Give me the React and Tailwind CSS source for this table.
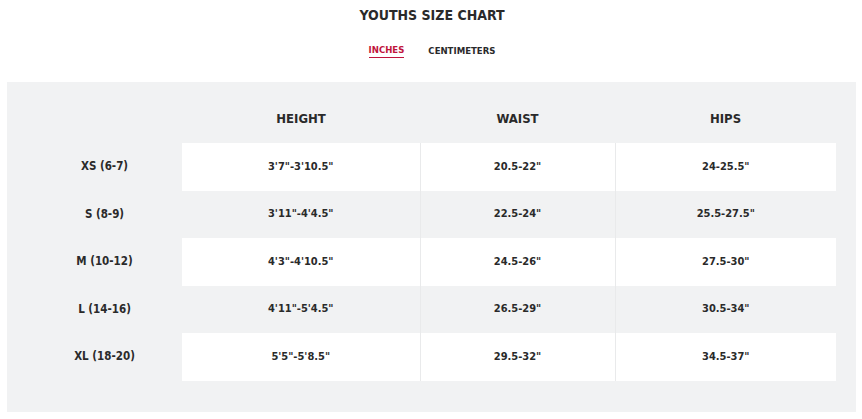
import React, { useState } from 'react'

const rows = [
  { size: 'XS (6-7)', height: `3'7"-3'10.5"`, waist: '20.5-22"', hips: '24-25.5"' },
  { size: 'S (8-9)', height: `3'11"-4'4.5"`, waist: '22.5-24"', hips: '25.5-27.5"' },
  { size: 'M (10-12)', height: `4'3"-4'10.5"`, waist: '24.5-26"', hips: '27.5-30"' },
  { size: 'L (14-16)', height: `4'11"-5'4.5"`, waist: '26.5-29"', hips: '30.5-34"' },
  { size: 'XL (18-20)', height: `5'5"-5'8.5"`, waist: '29.5-32"', hips: '34.5-37"' },
]

export default function App() {
  const [unit, setUnit] = useState('in')
  const font = { fontFamily: '"DejaVu Sans Condensed", "DejaVu Sans", sans-serif' }

  return (
    <div className="w-[862px] h-[419px] bg-white text-[#2a2a2a] font-bold" style={font}>
      <h1 className="pt-[8px] h-[34px] text-center text-[14px] leading-[14px] pl-[2px]">YOUTHS SIZE CHART</h1>
      <div className="flex justify-center gap-[24px] pl-[2px] h-[48px] pt-[9px]">
        <button
          type="button"
          onClick={() => setUnit('in')}
          className={`text-[9.5px] leading-[14px] h-[15px] ${unit === 'in' ? 'text-[#c0143c] border-b border-[#c0143c]' : ''}`}
        >
          INCHES
        </button>
        <button
          type="button"
          onClick={() => setUnit('cm')}
          className={`text-[9.5px] leading-[14px] h-[15px] ${unit === 'cm' ? 'text-[#c0143c] border-b border-[#c0143c]' : ''}`}
        >
          CENTIMETERS
        </button>
      </div>
      <div className="mx-[7px] mr-[6px] bg-[#f1f2f3] px-[20px] pt-[20px] h-[330px]">
        <table className="w-full border-collapse text-center">
          <colgroup>
            <col className="w-[155px]" />
            <col className="w-[238px]" />
            <col className="w-[195px]" />
            <col className="w-[221px]" />
          </colgroup>
          <thead>
            <tr>
              <th className="h-[41px] pb-[7px]"></th>
              <th className="h-[41px] pb-[7px] text-[13px]">HEIGHT</th>
              <th className="h-[41px] pb-[7px] text-[13px]">WAIST</th>
              <th className="h-[41px] pb-[7px] text-[13px]">HIPS</th>
            </tr>
          </thead>
          <tbody className="text-[11px]">
            {rows.map((r, i) => {
              const bg = i % 2 === 0 ? 'bg-white' : ''
              return (
                <tr key={r.size} className="h-[47.5px]">
                  <td className="text-[11.5px]">{r.size}</td>
                  <td className={`${bg} border-r border-[#e9eaeb]`}>{r.height}</td>
                  <td className={`${bg} border-r border-[#e9eaeb]`}>{r.waist}</td>
                  <td className={bg}>{r.hips}</td>
                </tr>
              )
            })}
          </tbody>
        </table>
      </div>
    </div>
  )
}
